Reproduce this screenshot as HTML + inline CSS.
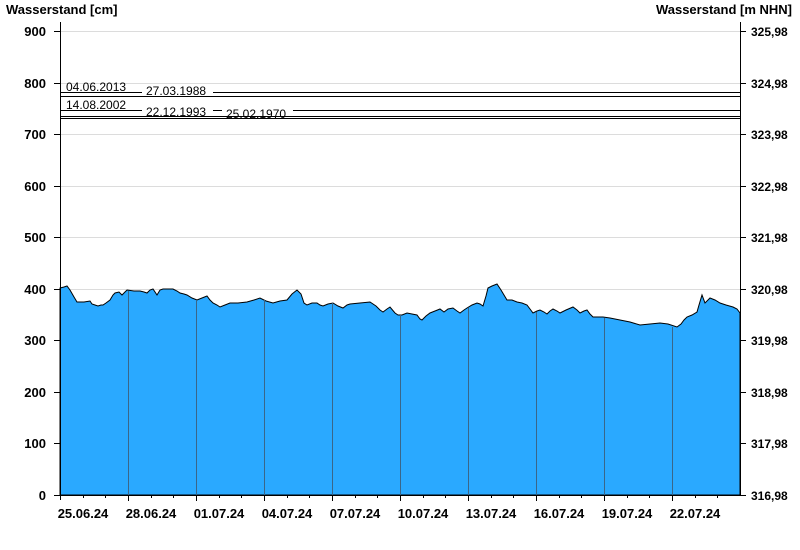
<!DOCTYPE html>
<html><head><meta charset="utf-8"><style>
html,body{margin:0;padding:0;background:#fff;}
svg{display:block;font-family:"Liberation Sans",Arial,sans-serif;}
.b{font-weight:bold;font-size:12px;fill:#000;}
.h{font-weight:bold;font-size:13px;fill:#000;}
.d{font-weight:bold;font-size:13px;fill:#000;}
.n{font-size:12px;fill:#000;}
</style></head><body>
<svg width="800" height="550" viewBox="0 0 800 550">
<text class="h" x="6" y="14">Wasserstand [cm]</text>
<text class="h" x="792" y="14" text-anchor="end">Wasserstand [m NHN]</text>
<g stroke="#dcdcdc" stroke-width="1">
<line x1="60" y1="31.5" x2="740" y2="31.5"/><line x1="60" y1="83.5" x2="740" y2="83.5"/>
<line x1="60" y1="134.5" x2="740" y2="134.5"/><line x1="60" y1="186.5" x2="740" y2="186.5"/>
<line x1="60" y1="237.5" x2="740" y2="237.5"/><line x1="60" y1="289.5" x2="740" y2="289.5"/>
<line x1="60" y1="340.5" x2="740" y2="340.5"/><line x1="60" y1="392.5" x2="740" y2="392.5"/>
<line x1="60" y1="443.5" x2="740" y2="443.5"/>
</g>
<polygon fill="#2aa9ff" stroke="#000" stroke-width="1" points="60,288 64,287 67,286 70,290 74,297 77,302 84,302 90,301 92,304 95,305 98,306 101,305 103,305 106,303 110,300 113,295 115,293 119,292 122,295 125,292 127,290 134,291 140,291 144,292 147,293 150,290 153,289 157,295 160,290 163,289 168,289 173,289 177,291 180,293 184,294 187,295 192,298 197,300 202,298 207,296 210,300 213,303 217,305 220,307 225,305 230,303 238,303 247,302 254,300 260,298 266,301 273,303 280,301 287,300 292,294 297,290 301,294 304,303 307,305 312,303 317,303 320,305 323,306 328,304 333,303 338,306 343,308 347,305 350,304 360,303 370,302 376,306 380,310 383,312 387,309 390,307 395,313 398,315 402,315 407,313 412,314 417,315 420,319 422,320 426,316 430,313 435,311 440,309 444,312 448,309 453,308 457,311 460,313 464,310 467,308 472,305 477,303 480,304 483,306 486,296 488,288 492,286 497,284 501,290 507,300 512,300 517,302 522,303 527,305 530,309 533,313 537,311 540,310 544,312 547,314 550,311 553,309 557,311 560,313 566,310 573,307 577,310 580,313 584,311 587,310 590,314 593,317 598,317 603,317 610,318 620,320 630,322 640,325 650,324 660,323 668,324 677,327 681,324 684,320 687,317 692,315 697,312 699,305 702,295 705,303 708,300 710,298 715,300 720,303 726,305 733,307 737,309 740,313 740,495 60,495"/>
<g stroke="#3a6688" stroke-width="1">
<line x1="128.5" y1="291" x2="128.5" y2="495"/><line x1="196.5" y1="300" x2="196.5" y2="495"/>
<line x1="264.5" y1="300" x2="264.5" y2="495"/><line x1="332.5" y1="303" x2="332.5" y2="495"/>
<line x1="400.5" y1="315" x2="400.5" y2="495"/><line x1="468.5" y1="308" x2="468.5" y2="495"/>
<line x1="536.5" y1="312" x2="536.5" y2="495"/><line x1="604.5" y1="318" x2="604.5" y2="495"/>
<line x1="672.5" y1="327" x2="672.5" y2="495"/>
</g>
<g stroke="#000" stroke-width="1">
<line x1="60" y1="92.5" x2="740" y2="92.5"/>
<line x1="60" y1="96.5" x2="740" y2="96.5"/>
<line x1="60" y1="110.5" x2="740" y2="110.5"/>
<line x1="60" y1="116.5" x2="740" y2="116.5"/>
<line x1="60" y1="118.5" x2="740" y2="118.5"/>
</g>
<rect x="142" y="84" width="71" height="12" fill="#fff"/>
<rect x="142" y="105" width="71" height="11" fill="#fff"/>
<rect x="222" y="108" width="71" height="8" fill="#fff"/>
<text class="n" x="66" y="91">04.06.2013</text>
<text class="n" x="146" y="95">27.03.1988</text>
<text class="n" x="66" y="109">14.08.2002</text>
<text class="n" x="146" y="116">22.12.1993</text>
<text class="n" x="226" y="118">25.02.1970</text>
<g stroke="#000" stroke-width="1">
<line x1="60.5" y1="22" x2="60.5" y2="500"/>
<line x1="740.5" y1="22" x2="740.5" y2="495"/>
<line x1="54" y1="495.5" x2="740" y2="495.5"/>
</g>
<g stroke="#000" stroke-width="1">
<line x1="54" y1="31.5" x2="60" y2="31.5"/><line x1="54" y1="83.5" x2="60" y2="83.5"/>
<line x1="54" y1="134.5" x2="60" y2="134.5"/><line x1="54" y1="186.5" x2="60" y2="186.5"/>
<line x1="54" y1="237.5" x2="60" y2="237.5"/><line x1="54" y1="289.5" x2="60" y2="289.5"/>
<line x1="54" y1="340.5" x2="60" y2="340.5"/><line x1="54" y1="392.5" x2="60" y2="392.5"/>
<line x1="54" y1="443.5" x2="60" y2="443.5"/>
<line x1="740" y1="31.5" x2="746" y2="31.5"/><line x1="740" y1="83.5" x2="746" y2="83.5"/>
<line x1="740" y1="134.5" x2="746" y2="134.5"/><line x1="740" y1="186.5" x2="746" y2="186.5"/>
<line x1="740" y1="237.5" x2="746" y2="237.5"/><line x1="740" y1="289.5" x2="746" y2="289.5"/>
<line x1="740" y1="340.5" x2="746" y2="340.5"/><line x1="740" y1="392.5" x2="746" y2="392.5"/>
<line x1="740" y1="443.5" x2="746" y2="443.5"/><line x1="740" y1="495.5" x2="746" y2="495.5"/>
</g>
<g stroke="#000" stroke-width="1">
<line x1="128.5" y1="495" x2="128.5" y2="501"/><line x1="196.5" y1="495" x2="196.5" y2="501"/>
<line x1="264.5" y1="495" x2="264.5" y2="501"/><line x1="332.5" y1="495" x2="332.5" y2="501"/>
<line x1="400.5" y1="495" x2="400.5" y2="501"/><line x1="468.5" y1="495" x2="468.5" y2="501"/>
<line x1="536.5" y1="495" x2="536.5" y2="501"/><line x1="604.5" y1="495" x2="604.5" y2="501"/>
<line x1="672.5" y1="495" x2="672.5" y2="501"/>
<line x1="83.5" y1="495" x2="83.5" y2="498"/><line x1="105.5" y1="495" x2="105.5" y2="498"/>
<line x1="151.5" y1="495" x2="151.5" y2="498"/><line x1="173.5" y1="495" x2="173.5" y2="498"/>
<line x1="219.5" y1="495" x2="219.5" y2="498"/><line x1="241.5" y1="495" x2="241.5" y2="498"/>
<line x1="287.5" y1="495" x2="287.5" y2="498"/><line x1="309.5" y1="495" x2="309.5" y2="498"/>
<line x1="355.5" y1="495" x2="355.5" y2="498"/><line x1="377.5" y1="495" x2="377.5" y2="498"/>
<line x1="423.5" y1="495" x2="423.5" y2="498"/><line x1="445.5" y1="495" x2="445.5" y2="498"/>
<line x1="491.5" y1="495" x2="491.5" y2="498"/><line x1="513.5" y1="495" x2="513.5" y2="498"/>
<line x1="559.5" y1="495" x2="559.5" y2="498"/><line x1="581.5" y1="495" x2="581.5" y2="498"/>
<line x1="627.5" y1="495" x2="627.5" y2="498"/><line x1="649.5" y1="495" x2="649.5" y2="498"/>
<line x1="695.5" y1="495" x2="695.5" y2="498"/><line x1="717.5" y1="495" x2="717.5" y2="498"/>
</g>
<g text-anchor="end">
<text class="h" x="46" y="36">900</text><text class="h" x="46" y="88">800</text>
<text class="h" x="46" y="139">700</text><text class="h" x="46" y="191">600</text>
<text class="h" x="46" y="242">500</text><text class="h" x="46" y="294">400</text>
<text class="h" x="46" y="345">300</text><text class="h" x="46" y="397">200</text>
<text class="h" x="46" y="448">100</text><text class="h" x="46" y="500">0</text>
</g>
<g>
<text class="b" x="751" y="36">325,98</text><text class="b" x="751" y="88">324,98</text>
<text class="b" x="751" y="139">323,98</text><text class="b" x="751" y="191">322,98</text>
<text class="b" x="751" y="242">321,98</text><text class="b" x="751" y="294">320,98</text>
<text class="b" x="751" y="345">319,98</text><text class="b" x="751" y="397">318,98</text>
<text class="b" x="751" y="448">317,98</text><text class="b" x="751" y="500">316,98</text>
</g>
<g text-anchor="middle">
<text class="d" x="83" y="518">25.06.24</text><text class="d" x="151" y="518">28.06.24</text>
<text class="d" x="219" y="518">01.07.24</text><text class="d" x="287" y="518">04.07.24</text>
<text class="d" x="355" y="518">07.07.24</text><text class="d" x="423" y="518">10.07.24</text>
<text class="d" x="491" y="518">13.07.24</text><text class="d" x="559" y="518">16.07.24</text>
<text class="d" x="627" y="518">19.07.24</text><text class="d" x="695" y="518">22.07.24</text>
</g>
</svg>
</body></html>
